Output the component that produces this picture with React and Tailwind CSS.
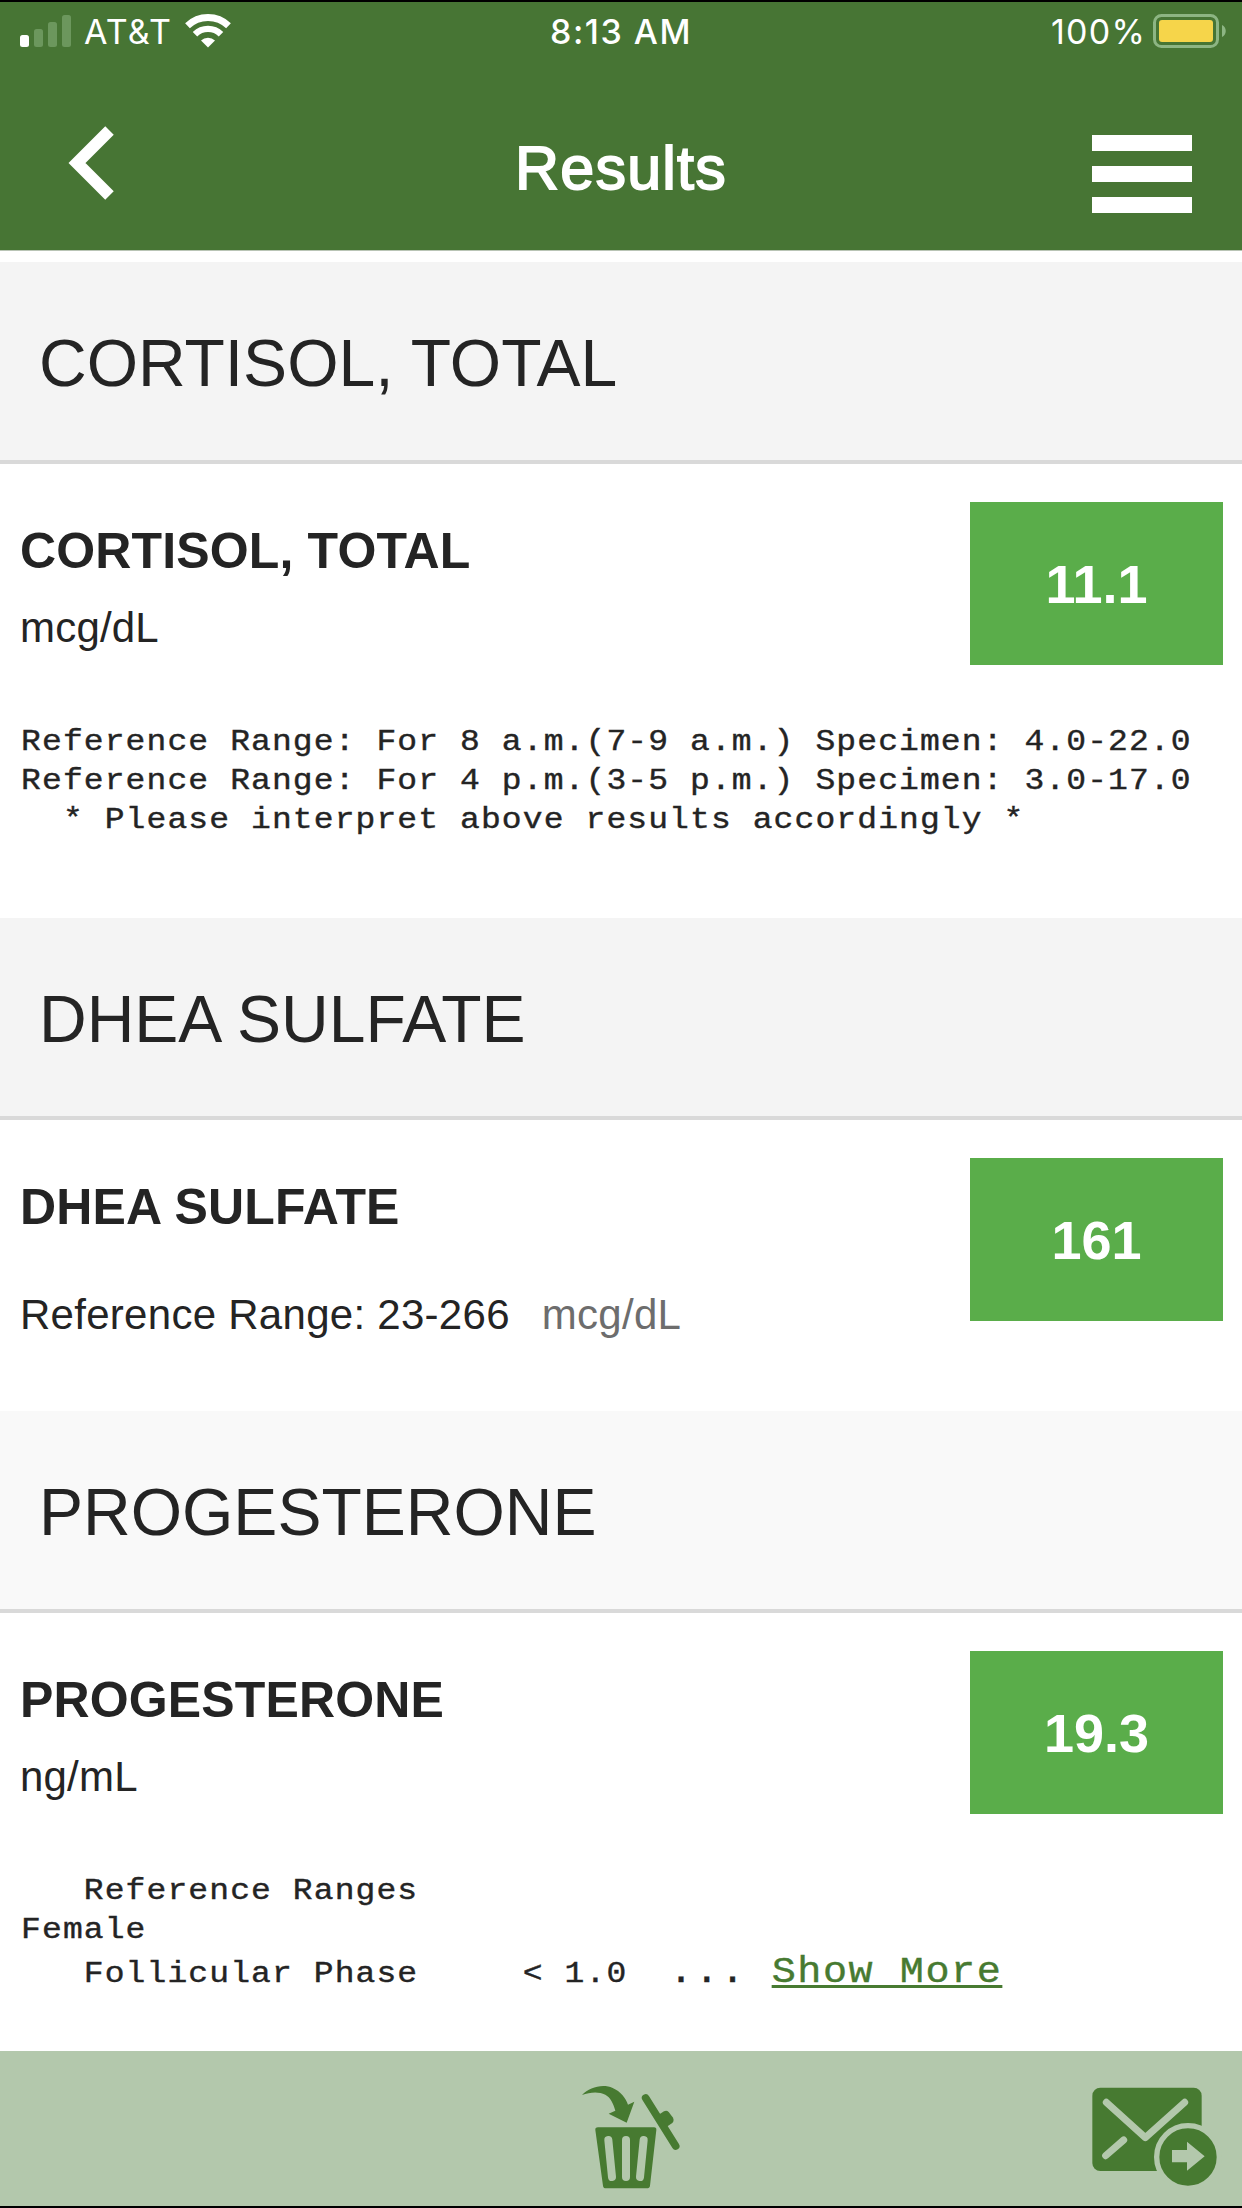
const results = [
  {
    name: 'CORTISOL, TOTAL',
    value: '11.1',
    unit: 'mcg/dL',
    headerClass: 'bg-[#f4f4f4]',
    lines: [
      'Reference Range: For 8 a.m.(7-9 a.m.) Specimen: 4.0-22.0',
      'Reference Range: For 4 p.m.(3-5 p.m.) Specimen: 3.0-17.0',
      '  * Please interpret above results accordingly *',
    ],
  },
  {
    name: 'DHEA SULFATE',
    value: '161',
    unit: 'mcg/dL',
    range: '23-266',
    headerClass: 'bg-[#f4f4f4]',
  },
  {
    name: 'PROGESTERONE',
    value: '19.3',
    unit: 'ng/mL',
    headerClass: 'bg-[#f9f9f9]',
    lines: ['   Reference Ranges', 'Female', '   Follicular Phase     < 1.0'],
    truncated: true,
  },
]

function SignalIcon() {
  return (
    <svg width="52" height="34" viewBox="0 0 52 34">
      <rect x="0" y="21" width="9" height="12" rx="2.5" fill="#fff" />
      <rect x="14" y="15" width="9" height="18" rx="2.5" fill="#6c975d" />
      <rect x="28" y="8" width="9" height="25" rx="2.5" fill="#6c975d" />
      <rect x="42" y="1" width="9" height="32" rx="2.5" fill="#6c975d" />
    </svg>
  )
}

function WifiIcon() {
  return (
    <svg width="46" height="34" viewBox="0 0 46 34" fill="none" stroke="#fff">
      <path d="M2.5 11.8 A29.5 29.5 0 0 1 43.5 11.8" strokeWidth="6.8" />
      <path d="M10 20.2 A18.6 18.6 0 0 1 36 20.2" strokeWidth="6.4" />
      <path d="M23 33.5 L16 26.6 A10 10 0 0 1 30 26.6 Z" fill="#fff" stroke="none" />
    </svg>
  )
}

function BatteryIcon() {
  return (
    <svg width="74" height="34" viewBox="0 0 74 34">
      <rect x="1.5" y="1.5" width="63" height="31" rx="7" fill="none" stroke="#8db583" strokeWidth="3" />
      <rect x="6" y="6" width="54" height="22" rx="3" fill="#f6d54a" />
      <path d="M69 11 C74 13 74 21 69 23 Z" fill="#8db583" />
    </svg>
  )
}

function TrashIcon() {
  return (
    <svg width="160" height="155" viewBox="0 33 480 465" fill="#477a31">
      <path d="M66 165 C88 142 128 130 158 144 C182 155 196 172 204 194 L223 185 L200 248 L146 221 L166 212 C160 190 151 172 136 164 C116 154 90 156 66 165 Z" />
      <path d="M257 174 L347 318" stroke="#477a31" strokeWidth="23" strokeLinecap="round" />
      <path d="M296 224 L312 214 Q320 210 326 216 L338 232 Q344 242 337 249 L318 262 Z" />
      <path d="M114 262 H282 Q290 262 289 270 L270 437 Q269 445 260 445 H138 Q130 445 129 437 L106 270 Q105 262 114 262 Z" />
      <g stroke="#b3c8ac" strokeLinecap="round" strokeWidth="24">
        <path d="M145 300 L156 411" />
        <path d="M198 300 V411" />
        <path d="M251 300 L240 411" />
      </g>
    </svg>
  )
}

function ForwardMailIcon() {
  return (
    <svg width="182" height="155" viewBox="0 33 546 465" fill="#477a31">
      <rect x="97" y="143" width="328" height="250" rx="24" />
      <g stroke="#b3c8ac" strokeWidth="21" strokeLinecap="round" strokeLinejoin="round" fill="none">
        <path d="M139 187 L256 293 L374 187" />
        <path d="M137 347 L191 300" />
      </g>
      <circle cx="384" cy="351" r="94" stroke="#b3c8ac" strokeWidth="16" />
      <path d="M336 330 H381 V305 L434 349 L381 392 V367 H336 Z" fill="#b3c8ac" />
    </svg>
  )
}

function Header() {
  return (
    <header className="h-[251px] shrink-0 border-t-2 border-b border-t-black border-b-[#b9c4b5] bg-[#477534] text-white">
      <div className="grid h-[58px] grid-cols-3 items-center font-['Inter',sans-serif] text-[34px]">
        <div className="flex items-center pl-5">
          <SignalIcon />
          <span className="ml-3 mr-[13px] tracking-[1.2px]">AT&amp;T</span>
          <WifiIcon />
        </div>
        <div className="text-center font-medium tracking-[1.5px]">8:13 AM</div>
        <div className="flex items-center justify-end pr-[15px]">
          <span className="mr-[7px] tracking-[1.2px]">100%</span>
          <BatteryIcon />
        </div>
      </div>

      <div className="grid grid-cols-3 items-start">
        <button type="button" className="ml-[66px] mt-[65px] w-[50px]">
          <svg width="50" height="76" viewBox="0 0 50 76" fill="none" stroke="#fff" strokeWidth="12">
            <path d="M43.5 5.5 L11 38 L43.5 70.5" />
          </svg>
        </button>
        <h1 className="mt-[73px] text-center text-[61px] leading-[70px] tracking-[1.2px] [-webkit-text-stroke:1.8px_white]">
          Results
        </h1>
        <button type="button" className="mr-[50px] mt-[75px] flex flex-col gap-[15px] justify-self-end">
          <span className="h-4 w-[100px] bg-white" />
          <span className="h-4 w-[100px] bg-white" />
          <span className="h-4 w-[100px] bg-white" />
        </button>
      </div>
    </header>
  )
}

function ReportText({ lines, truncated }) {
  return (
    <div className="mt-[66px] w-[1100px] origin-left scale-x-[1.1] whitespace-pre pl-px font-['Liberation_Mono',monospace] text-[30px] leading-[39px] tracking-[1px] [-webkit-text-stroke:0.4px]">
      {lines.map((line, index) => (
        <p key={line}>
          {line}
          {truncated && index === lines.length - 1 && (
            <span className="text-[36.5px] leading-[46px] tracking-[1.4px]">
              <span className="text-[30px] tracking-[1px]">{'  '}</span>
              {'... '}
              <a href="#more" className="text-[#477a31] underline decoration-[2.5px] underline-offset-[3px]">Show More</a>
            </span>
          )}
        </p>
      ))}
    </div>
  )
}

function ResultSection({ result }) {
  return (
    <section>
      <h2 className={`h-[202px] border-b-4 border-[#d9d9d9] pl-[39px] pt-1 text-[66px] leading-[194px] ${result.headerClass}`}>
        {result.name}
      </h2>
      <div className="pb-[78px] pl-5 pr-[19px] pt-[38px]">
        <div className="flex h-[155px] items-start justify-between">
          <div className="pt-[19px]">
            <h3 className="text-[50px] font-bold leading-[60px] tracking-[0.15px]">{result.name}</h3>
            {result.range ? (
              <p className="mt-12 text-[42px] leading-[60px] tracking-[0.28px]">
                Reference Range: {result.range}
                <span className="ml-8 text-[#6d6d6d]">{result.unit}</span>
              </p>
            ) : (
              <p className="mt-[17px] text-[42px] leading-[60px] tracking-[0.2px]">{result.unit}</p>
            )}
          </div>
          <div className="flex h-[163px] w-[253px] items-center justify-center bg-[#5aad4a] pt-0.5 text-[54px] font-bold text-white">
            {result.value}
          </div>
        </div>
        {result.lines ? <ReportText lines={result.lines} truncated={result.truncated} /> : <div className="h-5" />}
      </div>
    </section>
  )
}

export default function App() {
  return (
    <div className="flex h-[2208px] w-[1242px] flex-col overflow-hidden bg-white font-['Liberation_Sans',sans-serif] text-[#242424]">
      <Header />
      <main className="min-h-0 flex-1 overflow-hidden pt-[11px]">
        {results.map((result) => (
          <ResultSection key={result.name} result={result} />
        ))}
      </main>
      <footer className="flex h-[157px] shrink-0 justify-between border-b-2 border-black bg-[#b3c8ac] pl-[560px]">
        <button type="button"><TrashIcon /></button>
        <button type="button"><ForwardMailIcon /></button>
      </footer>
    </div>
  )
}
